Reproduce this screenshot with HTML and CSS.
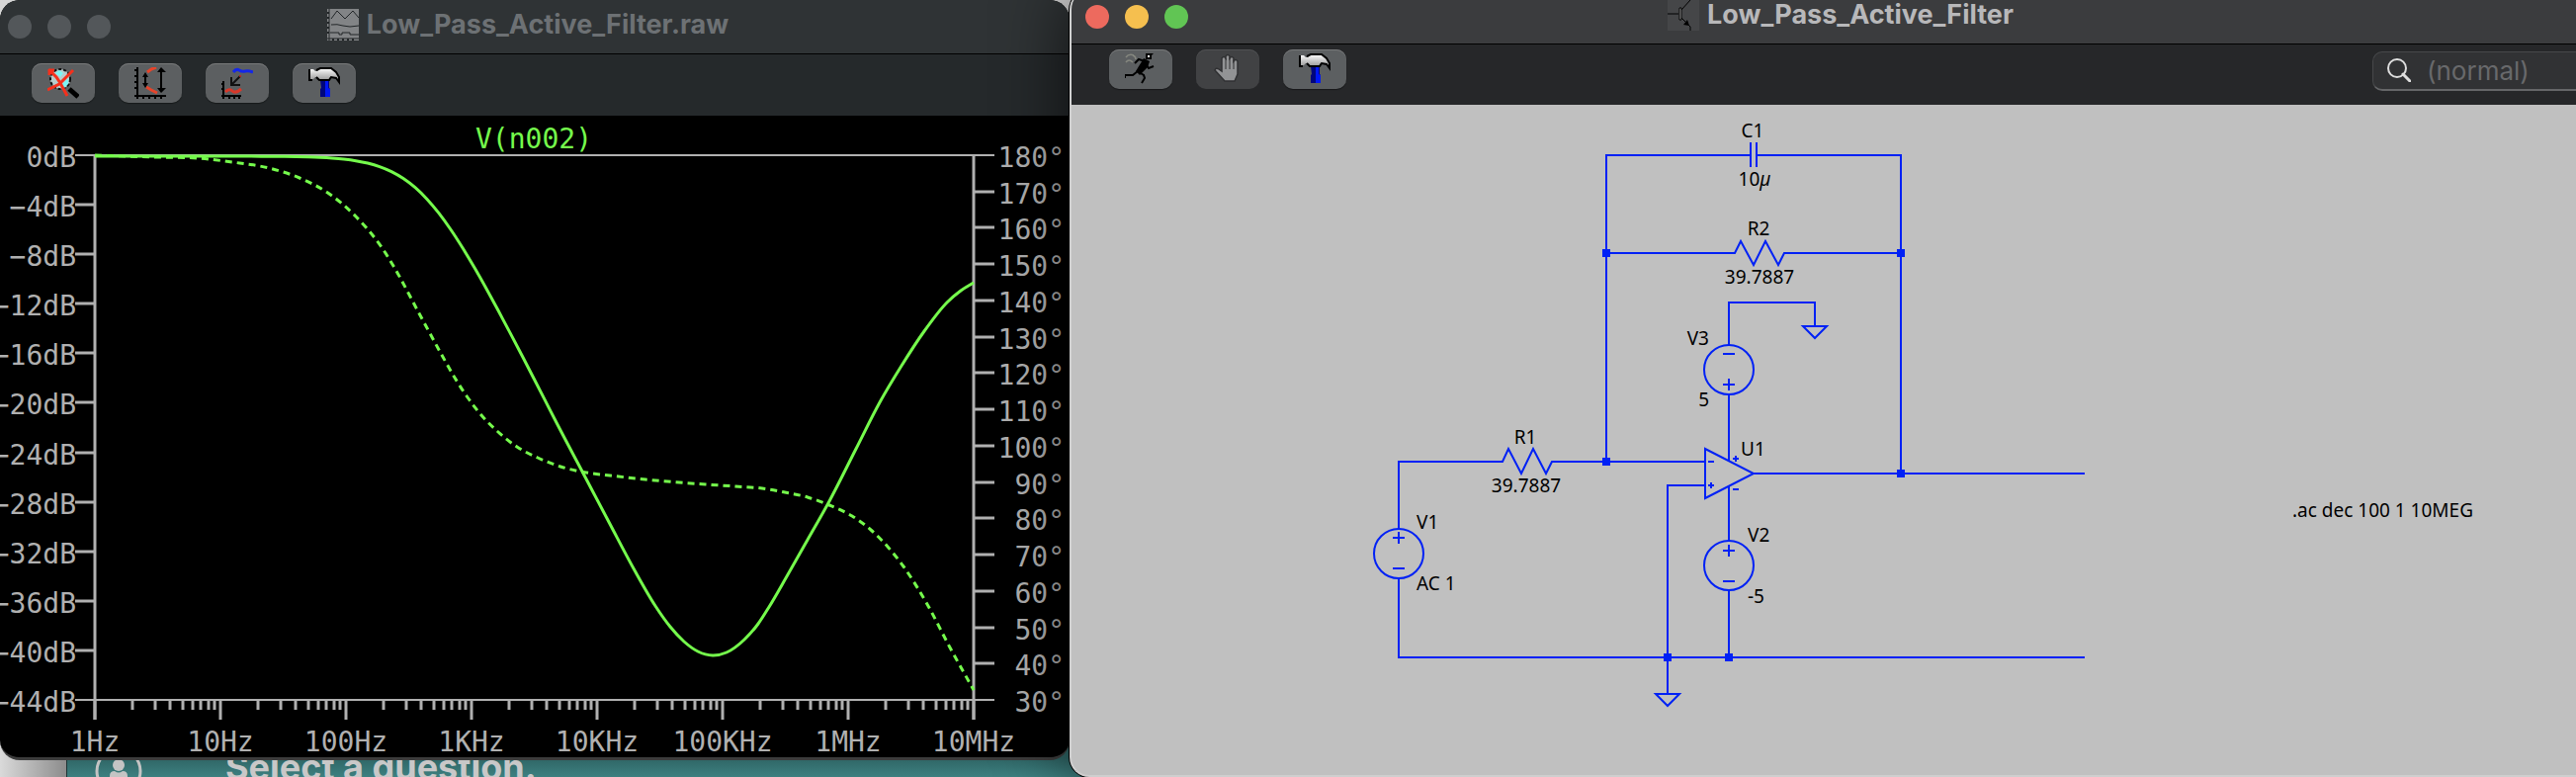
FILE: index.html
```html
<!DOCTYPE html>
<html lang="en">
<head>
<meta charset="utf-8">
<title>Low_Pass_Active_Filter</title>
<link rel="stylesheet" href="styles.css">
</head>
<body>
<svg class="defs" aria-hidden="true">
  <defs>
    <linearGradient id="steel" x1="0" y1="0" x2="0" y2="1"><stop offset="0" stop-color="#fff"/><stop offset=".5" stop-color="#c4c4c4"/><stop offset="1" stop-color="#8a8a8a"/></linearGradient>
    <symbol id="hammer" viewBox="0 0 32 32">
      <path d="M12 13h9v8l1 1v8H12v-8l1-1z" fill="#00067e"/>
      <path d="M17 13h3v8l2 1v8h-5z" fill="#0018f5"/>
      <path d="M1 2h4l2 2h2l3-3h11l5 4 3 5v5l-4-4-5-1-2 3H11l-2-3H7l-2 2H1z" fill="url(#steel)"/>
      <path d="M1 2v11h3M8 3l4-2h11l5 4 3 5v5l-3-4-5-1-2 3H11l-3-3" fill="none" stroke="#000" stroke-width="2"/>
    </symbol>
  </defs>
</svg>
<div class="desktop">
  <div class="backpage">
    <div class="backpage-gutter"></div>
    <div class="backpage-bar">
      <svg class="avatar" viewBox="0 0 48 48" aria-hidden="true"><circle cx="24" cy="24" r="22" fill="none" stroke="#c4c4c4" stroke-width="3"/><circle cx="24" cy="18" r="6" fill="#c4c4c4"/><path d="M15 38V29q0-5 5-5 4 3 8 0 5 0 5 5v9z" fill="#c4c4c4"/></svg>
      <strong class="backpage-title">Select a question.</strong>
    </div>
  </div>

  <section class="window window-plot">
    <header class="titlebar">
      <div class="lights"><button class="light" aria-label="Close"></button><button class="light" aria-label="Minimize"></button><button class="light" aria-label="Zoom"></button></div>
      <h1 class="title">
        <svg class="icon" viewBox="0 0 32 32" aria-hidden="true"><path d="M2 0h30v32H0V0z" fill="#828486"/><path d="M2 0v32M0 30h32" stroke="#222628" stroke-width="1"/><path d="M4 10l6-8 8 8 8-8 6 7" fill="none" stroke="#222628"/><path d="M4 16q6-1 12 1t16 0M3 24h9v2h3v-2h8v2h9" fill="none" stroke="#222628"/><path d="M0 4h2M0 9h2M0 14h2M0 19h2M0 24h2M6 30v2M11 30v2M16 30v2M21 30v2M26 30v2" stroke="#222628" stroke-width="2"/></svg>
        <span>Low_Pass_Active_Filter.raw</span>
      </h1>
    </header>
    <div class="toolbar">
      <button class="tool" aria-label="Zoom to fit">
        <svg class="icon" viewBox="0 0 32 32" aria-hidden="true"><circle cx="13" cy="12" r="10" fill="#b8cccc" stroke="#111" stroke-width="2" stroke-dasharray="3 2"/><path d="M8 6l4-3 4 3-3 4zM14 18l7-7v6l-4 4z" fill="#7df4f4"/><path d="M22 22l9 8" stroke="#000" stroke-width="5"/><path d="M1 2l8 8 4 6 7 13M26 3l-8 8-6 6-12 6M2 3h5M2 3v5" fill="none" stroke="#f5301c" stroke-width="3"/></svg>
      </button>
      <button class="tool" aria-label="Autorange">
        <svg class="icon" viewBox="0 0 32 32" aria-hidden="true"><path d="M3 0v32M0 29h32" stroke="#000" stroke-width="2"/><path d="M0 3h3M0 9h3M0 15h3M0 21h3M9 29v3M15 29v3M21 29v3M27 29v3" stroke="#000" stroke-width="2"/><path d="M13 5l4-3 5-2M12 20l5 3 6 3" fill="none" stroke="#e8442a" stroke-width="3"/><path d="M11 7v12M27 1v24" stroke="#000" stroke-width="2"/><path d="M11 5l3 5H8zM11 21l3-5H8zM27 0l5 5h-9zM27 26l5-5h-9z"/></svg>
      </button>
      <button class="tool" aria-label="Add trace">
        <svg class="icon" viewBox="0 0 32 32" aria-hidden="true"><path d="M12 5q3-4 6-2t6 1 8 1" fill="none" stroke="#1427e8" stroke-width="3"/><path d="M19 9l-8 8M10 10v8h9" fill="none" stroke="#111" stroke-width="2"/><circle cx="19" cy="9" r="1" fill="#c22"/><path d="M2 14v18M0 29h20M0 17h2M0 22h2M8 29v3M13 29v3M18 29v3" stroke="#000" stroke-width="2"/><path d="M4 25q4-4 7-1t9-2" fill="none" stroke="#d8382a" stroke-width="3"/></svg>
      </button>
      <button class="tool" aria-label="Control panel"><svg class="icon" aria-hidden="true"><use href="#hammer"/></svg></button>
    </div>
    <svg class="plot" id="plot" viewBox="0 117 1082 649" role="img" aria-label="Bode plot of V(n002)">
      <text class="trace-name" x="540" y="150">V(n002)</text>
      <g id="axes"></g>
      <path id="phase" class="trace trace-phase"/>
      <path id="gain" class="trace"/>
    </svg>
  </section>

  <section class="window window-schematic">
    <header class="titlebar">
      <div class="lights"><button class="light light-close" aria-label="Close"></button><button class="light light-min" aria-label="Minimize"></button><button class="light light-max" aria-label="Zoom"></button></div>
      <h1 class="title">
        <svg class="icon" viewBox="0 0 32 32" aria-hidden="true"><path d="M0 0h32v32H0z" fill="#454648"/><path d="M0 15h11M14 11L23 1M14 19l9 9v4" fill="none" stroke="#000"/><path d="M12 9h2v12h-2z" fill="#999" stroke="#000"/><path d="M22 27l-6-1 4-5z"/></svg>
        <span>Low_Pass_Active_Filter</span>
      </h1>
    </header>
    <div class="toolbar">
      <button class="tool" aria-label="Run">
        <svg class="icon" viewBox="0 0 32 32" aria-hidden="true"><path d="M1 4q3-4 8-2M1 9q3-4 7 0M8 2q3 1 3 4" fill="none" stroke="#85877f" stroke-width="1.5"/><path d="M21 0h8l-2 2v4h-6z"/><path d="M23 2h2v2h-2z" fill="#fff"/><path d="M19 5l6 3-2 6-8 8-4-4z"/><path d="M20 8l-6-2-4 4M22 12l2 3 5-2M13 18l-5 4H0M0 21v4M14 19l5 3 1 3-3 5" fill="none" stroke="#000" stroke-width="2"/></svg>
      </button>
      <button class="tool" aria-label="Halt" disabled>
        <svg class="icon" viewBox="0 0 32 32" aria-hidden="true"><path d="M10 18V5q2-3 4 0V3q2-3 4 0v2q2-3 4 0v3q2-3 4 0v13l-3 7H13L3 17q1-3 4-1z" fill="#929395" stroke="#303133" stroke-width="1.5"/><path d="M14 5v11M18 4v12M22 6v10" stroke="#303133"/></svg>
      </button>
      <button class="tool" aria-label="Control panel"><svg class="icon" aria-hidden="true"><use href="#hammer"/></svg></button>
      <label class="search">
        <svg class="search-icon" viewBox="0 0 24 24" aria-hidden="true"><circle cx="10" cy="10" r="9" fill="none" stroke="#dedede" stroke-width="2"/><path d="M16 16l7 7" stroke="#dedede" stroke-width="3" stroke-linecap="round"/></svg>
        <input class="search-input" type="text" placeholder="(normal)" aria-label="Search">
      </label>
    </div>
    <svg class="schematic" viewBox="1084 106 1556 678" role="img" aria-label="Active low pass filter schematic">
      <g class="wires">
        <path d="M1771 157H1625V467M1777 157H1923V479M1771 144v25M1777 144v25"/>
        <path d="M1625 256H1755L1761 244L1774 268L1786 244L1799 268L1805 256H1923"/>
        <path d="M1415 535V467H1520L1526 454L1539 479L1551 454L1564 479L1570 467H1725"/>
        <path d="M1725 454L1774 479L1725 504ZM1774 479H2109"/>
        <path d="M1725 491H1687V702M1675 702H1699L1687 714Z"/>
        <path d="M1415 584V665H2109"/>
        <path d="M1749 349V306H1836V330M1824 330H1848L1836 342Z"/>
        <path d="M1749 398V467M1749 491V547M1749 597V665"/>
        <circle cx="1415" cy="560" r="25"/><circle cx="1749" cy="572" r="25"/><circle cx="1749" cy="374" r="25"/>
        <path d="M1409 544h12M1415 538v12M1409 575h12M1743 557h12M1749 551v12M1743 588h12M1743 358h12M1743 389h12M1749 383v12"/>
        <path d="M1728 467h6M1728 491h6M1731 488v6M1753 464h6M1756 461v6M1753 495h6"/>
      </g>
      <g class="nodes">
        <rect x="1621" y="252" width="8" height="8"/><rect x="1919" y="252" width="8" height="8"/><rect x="1621" y="463" width="8" height="8"/><rect x="1919" y="475" width="8" height="8"/><rect x="1683" y="661" width="8" height="8"/><rect x="1745" y="661" width="8" height="8"/>
      </g>
      <g class="labels">
        <g class="mid">
          <text x="1773" y="139">C1</text><text x="1775" y="188">10<tspan class="micro">µ</tspan></text>
          <text x="1779" y="238">R2</text><text x="1780" y="287">39.7887</text>
          <text x="1543" y="449">R1</text><text x="1544" y="498">39.7887</text>
        </g>
        <text x="1433" y="535">V1</text><text x="1433" y="597">AC 1</text>
        <text x="1768" y="548">V2</text><text x="1768" y="610">-5</text>
        <g class="end"><text x="1729" y="349">V3</text><text x="1729" y="411">5</text></g>
        <text x="1761" y="461">U1</text>
        <text x="2319" y="523">.ac dec 100 1 10MEG</text>
      </g>
    </svg>
  </section>
</div>
<script src="plot.js"></script>
</body>
</html>
```
FILE: styles.css
```css
* { box-sizing: border-box; }
body { margin: 0; font-family: Inter, "Liberation Sans", sans-serif; }
button { padding: 0; border: 0; font: inherit; }
.defs { position: absolute; width: 0; height: 0; }

.desktop {
  position: relative;
  display: grid;
  grid-template-columns: 1082fr 1524fr;
  align-items: start;
  min-height: 100vh;
  overflow: hidden;
  background: #d6d6d6;
}

/* browser page that shows below the windows */
.backpage { position: absolute; left: 0; right: 0; bottom: 0; height: 32px; display: flex; overflow: hidden; }
.backpage-gutter { width: 68px; background: linear-gradient(90deg, #dadada, #8c8c8c); border-right: 1px solid #1c3334; }
.backpage-bar { flex: 1; display: flex; align-items: flex-start; gap: 84px; padding-left: 28px; background: linear-gradient(#2f6565 40%, #3d8080); }
.avatar { flex: none; width: 48px; height: 48px; margin-top: 2px; }
.backpage-title { margin-top: 2px; font-size: 36px; line-height: 40px; color: #c8c8c8; }

.window { position: relative; overflow: hidden; border-radius: 20px; display: flex; flex-direction: column; }
.titlebar { position: relative; display: flex; align-items: center; justify-content: center; }
.lights { position: absolute; left: 0; display: flex; gap: 16px; }
.light { width: 24px; height: 24px; border-radius: 50%; background: #53575a; }
.light-close { background: #ed6a5e; }
.light-min { background: #f5bf4f; }
.light-max { background: #61c554; }
.title { display: flex; align-items: center; gap: 8px; margin: 0; padding-bottom: 4px; font-size: 27px; line-height: 32px; font-weight: 700; }
.icon { display: block; width: 32px; height: 32px; }
.toolbar { display: flex; align-items: center; gap: 24px; }
.tool {
  display: grid; place-items: center;
  width: 64px; height: 40px;
  border-radius: 10px;
  background: #5c5f61;
  box-shadow: inset 0 1px #77797a, 0 1px 1px #0006;
}
.tool:disabled { background: #414244; box-shadow: inset 0 1px #505153; }

.window-plot { background: #000; border-bottom: 3px solid #3c3c3c; }
.window-plot .titlebar { height: 55px; padding-right: 14px; background: #2f3335; border-bottom: 1px solid #000; color: #6d7174; }
.window-plot .lights { left: 8px; }
.window-plot .toolbar { height: 62px; padding: 0 32px 4px; background: #25292b; }
.plot { display: block; width: 100%; }
.plot text { font: 28px "DejaVu Sans Mono", "Liberation Mono", monospace; fill: #b0b0b0; text-anchor: middle; }
.plot .y-label { text-anchor: end; }
.plot .trace-name { fill: #75fb4c; }
.axis { fill: none; stroke: #b0b0b0; stroke-width: 2; }
.axis-bold { fill: none; stroke: #b0b0b0; stroke-width: 3; }
.trace { fill: none; stroke: #75fb4c; stroke-width: 3; }
.trace-phase { stroke-dasharray: 7 5; }

.window-schematic {
  margin: -10px -34px 0 0;
  border-left: 2px solid #d0d0d0;
  border-bottom: 2px solid #cecece;
  background: #c0c0c0;
  box-shadow: 0 0 0 1px #000, 0 0 70px #000a;
}
.window-schematic .titlebar { height: 55px; background: #3b3c3e; border-bottom: 1px solid #000; color: #b8b8ba; }
.window-schematic .lights { left: 14px; }
.window-schematic .toolbar { height: 61px; padding: 0 16px 12px 38px; background: #262729; }
.search {
  display: flex; align-items: center; gap: 16px;
  width: 224px; height: 40px; margin: 4px 0 0 auto; padding: 0 14px;
  border: 1px solid #47484a; border-bottom: 2px solid #656668; border-radius: 10px;
  background: #313234;
}
.search-icon { flex: none; width: 24px; height: 24px; }
.search-input { flex: 1; min-width: 0; padding: 0; border: 0; outline: 0; background: none; color: #ddd; font: 26px Inter, sans-serif; }
.search-input::placeholder { color: #68696b; opacity: 1; }

.schematic { display: block; width: 100%; }
.wires { fill: none; stroke: #0021f5; stroke-width: 2; }
.nodes { fill: #0021f5; }
.labels { font: 19px "Noto Sans", sans-serif; }
.mid { text-anchor: middle; }
.end { text-anchor: end; }
.micro { font-style: italic; }
```
FILE: plot.js
```js
const LEFT = 96, RIGHT = 985, TOP = 157, BOTTOM = 708;
const NS = 'http://www.w3.org/2000/svg';
const axes = document.getElementById('axes');

function line(d, cls) {
  const p = document.createElementNS(NS, 'path');
  p.setAttribute('d', d);
  p.setAttribute('class', cls);
  axes.append(p);
}
function label(x, y, text, cls) {
  const t = document.createElementNS(NS, 'text');
  t.setAttribute('x', x);
  t.setAttribute('y', y);
  if (cls) t.setAttribute('class', cls);
  t.textContent = text;
  axes.append(t);
}

line(`M76 ${TOP}H1006M76 ${BOTTOM}H1006`, 'axis');
line(`M${LEFT} ${TOP}V728M${RIGHT} ${TOP}V728`, 'axis-bold');

for (let i = 0; i <= 11; i++) {
  const y = Math.round(TOP + (BOTTOM - TOP) * i / 11);
  if (i % 11) line(`M76 ${y}H${LEFT}`, 'axis-bold');
  label(77, y + 12, (i ? '−' : '') + i * 4 + 'dB', 'y-label');
}
for (let i = 0; i <= 15; i++) {
  const y = Math.round(TOP + (BOTTOM - TOP) * i / 15);
  if (i % 15) line(`M${RIGHT} ${y}H1006`, 'axis-bold');
  label(1077, y + 12, 180 - i * 10 + '°', 'y-label');
}
['1Hz', '10Hz', '100Hz', '1KHz', '10KHz', '100KHz', '1MHz', '10MHz'].forEach((name, k) => {
  const x = LEFT + 127 * k;
  line(`M${x} ${BOTTOM}V728`, 'axis-bold');
  label(x, 760, name);
  if (k === 7) return;
  for (let m = 2; m < 10; m++) line(`M${Math.round(x + 127 * Math.log10(m))} ${BOTTOM}V718`, 'axis-bold');
});

// smooth path through samples that are unevenly spaced in x
function spline(pts) {
  const n = pts.length;
  const slope = i => (pts[i + 1][1] - pts[i][1]) / (pts[i + 1][0] - pts[i][0]);
  const tangent = pts.map((p, i) => {
    if (i === 0) return slope(0);
    if (i === n - 1) return slope(n - 2);
    const before = p[0] - pts[i - 1][0], after = pts[i + 1][0] - p[0];
    return (slope(i - 1) * after + slope(i) * before) / (before + after);
  });
  let d = `M${pts[0]}`;
  for (let i = 0; i < n - 1; i++) {
    const b = pts[i], c = pts[i + 1], h = (c[0] - b[0]) / 3;
    d += `C${b[0] + h} ${b[1] + h * tangent[i]} ${c[0] - h} ${c[1] - h * tangent[i + 1]} ${c}`;
  }
  return d;
}

const gain = [];
for (let x = 96; x <= 565; x += 12) {
  const f = Math.pow(10, (x - LEFT) / 127);
  gain.push([x, 158 + 125.2 * Math.log10(1 + (f / 400) ** 2)]);
}
gain.push([588, 475], [617, 530], [642, 577], [663, 613], [678, 634], [692, 649], [706, 659], [721, 663],
  [735, 660], [753, 647], [767, 631], [778, 614], [796, 583], [817, 546], [839, 507],
  [866, 454], [890, 407], [912, 370], [935, 335], [958, 306], [972, 294], [985, 286]);
const phase = [[96, 157], [160, 159], [200, 160], [235, 164], [272, 170], [303, 180], [333, 196], [360, 219],
  [372, 232], [386, 250], [398, 269], [424, 317], [448, 361], [460, 382], [473, 402],
  [487, 420], [504, 437], [523, 452], [544, 463], [567, 472], [593, 478], [617, 481], [653, 485],
  [714, 490], [744, 492], [771, 494], [794, 498], [817, 503], [839, 511], [862, 522], [881, 536], [898, 553],
  [914, 573], [939, 613], [961, 655], [985, 698]];
document.getElementById('gain').setAttribute('d', spline(gain));
document.getElementById('phase').setAttribute('d', spline(phase));
```
